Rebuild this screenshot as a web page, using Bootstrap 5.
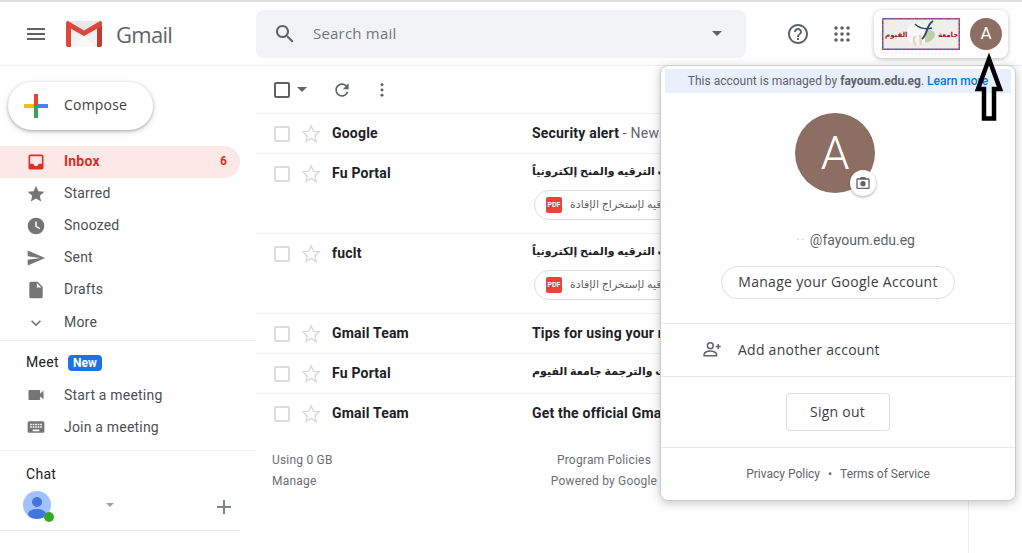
<!DOCTYPE html>
<html lang="en">
<head>
<meta charset="utf-8">
<title>Gmail</title>
<link href="https://cdn.jsdelivr.net/npm/bootstrap@5.3.0/dist/css/bootstrap.min.css" rel="stylesheet">
<style>
html,body{height:553px;overflow:hidden;background:#fff}
body{font-family:Roboto,"DejaVu Sans",sans-serif;font-size:14px;color:#202124}
.gs{font-family:"Open Sans",Roboto,sans-serif}
.stage{position:relative;height:553px;border-top:2px solid #e0e0e0;margin-top:0}
.topbar{height:64px;border-bottom:1px solid #eceff1;padding:0 14px 0 16px}
.ibtn{width:20px;height:20px;fill:#5f6368;flex:none;display:block}
.logo-word{font-size:22px;color:#5f6368;margin-left:14px;width:140px;line-height:1;letter-spacing:-.7px}
.searchbox{width:490px;height:48px;margin-left:0;background:#f1f3f4;border-radius:8px;padding:0 24px 0 17px}
.searchbox .label{margin-left:16px;font-size:15px;color:#73777c;letter-spacing:.2px}
.chip{width:134px;height:48px;background:#fff;border-radius:8px;box-shadow:0 1px 4px rgba(60,64,67,.35);padding:0 6px 0 8px}
.av{background:#8d6e63;color:#fff;border-radius:50%;display:flex;align-items:center;justify-content:center}
.av-sm{width:32px;height:32px;font-size:17px}
.side{width:256px;flex:none;height:487px}
.compose{width:145px;height:48px;margin:16px 0 16px 8px;border-radius:24px;background:#fff;box-shadow:0 1px 3px rgba(60,64,67,.35),0 2px 6px rgba(60,64,67,.18);padding:0 0 3px 16px;color:#3c4043;font-size:14px;letter-spacing:.2px;border:0}
.compose svg{margin-top:3px}
.navrow{height:32px;width:240px;padding:0 13px 0 26px;color:#4b4f54;border-radius:0 16px 16px 0;font-size:14px;letter-spacing:.2px}
.navrow .ibtn{margin-right:18px;fill:#757575}
.navlabel{padding-bottom:2px}
.navrow.on{background:#fce8e6;color:#d93025;font-weight:700}
.navrow.on .ibtn{fill:#d93025}
.navmore{height:34px}
.hr1{height:1px;background:#eceff1;width:256px}
.meethead{height:38px;padding:5px 0 0 26px;font-size:14px;color:#202124;letter-spacing:.3px}
.newtag{background:#1a73e8;font-size:12px;font-weight:700;padding:1px 0;border-radius:4px;margin-left:9px;line-height:14px;width:34px;text-align:center;letter-spacing:0}
.chathead{padding:13px 0 0 26px;height:40px;color:#202124;font-size:14px;line-height:20px;letter-spacing:.3px}
.chatrow{padding:0 9px 0 23px;width:240px;height:40px;border-bottom:1px solid #e3e5e8;position:relative}
.me{width:28px;height:28px;display:block}
.content{width:713px;flex:none;border-right:1px solid #eee;height:487px}
.tools{height:48px;border-bottom:1px solid #eceff1;padding-left:18px}
.cbdark{width:16px;height:16px;border:2px solid #5f6368;border-radius:2px}
.msgs .list-group-item{padding:0 0 0 18px;height:40px;border-color:#eceff1;border-width:0 0 1px;display:flex;white-space:nowrap;overflow:hidden;background:#fff;color:#202124}
.msgs .list-group-item.tall{height:80px}
.cb{width:16px;height:16px;border:2px solid #dcdcdc;border-radius:2px;margin-top:12px;flex:none}
.st{width:20px;height:20px;margin:10px 0 0 11px;flex:none;fill:none;stroke:#d9d9d9;stroke-width:1.6}
.who{width:200px;margin-left:11px;flex:none;font-weight:700;line-height:38px;letter-spacing:.2px}
.what{line-height:38px;font-weight:700;letter-spacing:.2px}
.what small{font-weight:400;font-size:14px;color:#5f6368}
.what .ar{font-size:11px;line-height:36px}
.attach{height:30px;margin:0 0 0 2px;border:1px solid #dadce0;border-radius:15px;padding:0 11px;width:300px;font-size:11px;font-weight:400;color:#5f6368}
.pdf{width:16px;height:16px;border-radius:2px;background:#ea4335;color:#fff;font-size:7px;font-weight:700;margin-right:8px;flex:none;text-align:center;line-height:16px;letter-spacing:0}
.foot{padding:16px 0 0 16px;font-size:12px;line-height:20.5px;color:#6b6f74;letter-spacing:.2px}
.foot-l{width:278px}
.foot-c{width:108px;white-space:nowrap}
.account{position:absolute;left:660px;top:63px;width:356px;height:436px;border:1px solid #ccc;border-radius:8px;box-shadow:0 2px 10px rgba(60,64,67,.3);background:#fff}
.managed{height:24px;margin:3px 4px 0;background:#e8f0fe;border-radius:0;font-size:12px;color:#5f6368;line-height:24px}
.managed a{color:#0b74f0;text-decoration:none;font-weight:500}
.av-wrap{position:relative;width:80px;height:80px;margin:20px 0 0 134px}
.av-lg{width:80px;height:80px;font-size:46px;font-weight:300}
.cam{position:absolute;left:55px;bottom:-3px;width:26px;height:26px;border-radius:50%;background:#fff;box-shadow:0 1px 3px rgba(60,64,67,.45);display:flex;align-items:center;justify-content:center}
.mail{margin-top:37px;height:20px;line-height:20px;text-align:right;padding-right:100px;color:#5f6368;white-space:nowrap}
.mail i{font-style:normal;color:#c9ccd0;letter-spacing:1px}
.mgbtn{display:block;width:234px;height:33px;margin:16px 0 24px 60px;padding:0;line-height:30px;border:1px solid #dadce0;border-radius:17px;color:#3c4043;font-size:14px;letter-spacing:.3px;background:#fff}
.addrow{height:54px;border-top:1px solid #e8eaed;border-bottom:1px solid #e8eaed;padding:0 0 2px 41px;color:#3c4043;font-size:14px;letter-spacing:.25px}
.addrow svg{margin-right:16px;width:20px;height:20px}
.signwrap{height:71px;border-bottom:1px solid #e8eaed;padding-top:16px}
.outbtn{width:104px;height:38px;padding:0;line-height:34px;border:1px solid #dadce0;border-radius:4px;color:#3c4043;font-size:14px;letter-spacing:.25px;background:#fff;margin-left:-1px}
.legal{height:52px;font-size:12px;color:#5f6368}
.legal b{font-weight:400;margin:0 8px}
.annot{position:absolute;left:974px;top:51px;width:30px;height:68px}
</style>
</head>
<body>
<div class="stage">
  <header class="topbar d-flex align-items-center">
    <svg class="ibtn" viewBox="0 0 24 24" style="width:24px;height:24px;margin-left:8px" aria-label="Main menu"><path d="M3 18h18v-2H3v2zm0-5h18v-2H3v2zm0-7v2h18V6H3z"/></svg>
    <svg width="36" height="26" viewBox="0 0 36 26" style="margin-left:18px;flex:none" aria-label="Gmail logo">
      <path d="M2 0h32a2 2 0 0 1 2 2v22a2 2 0 0 1-2 2H2a2 2 0 0 1-2-2V2a2 2 0 0 1 2-2z" fill="#e8e8e8"/>
      <path d="M5 10l13 6 13-6v16H5z" fill="#f2f2f2"/>
      <path d="M5 26l13-11 13 11z" fill="#f9f9f9"/>
      <path d="M0 3V24a2 2 0 0 0 2 2h3V7z" fill="#d9483b"/>
      <path d="M36 3V24a2 2 0 0 1-2 2h-3V7z" fill="#c23b2e"/>
      <path d="M2 0L18 9.500 34 0a2 2 0 0 1 2 2v3L18 15 0 5V2a2 2 0 0 1 2-2z" fill="#d9483b"/>
    </svg>
    <span class="logo-word gs">Gmail</span>
    <div class="searchbox d-flex align-items-center flex-none">
      <svg class="ibtn" viewBox="0 0 24 24" style="width:24px;height:24px" aria-label="Search"><path d="M15.5 14h-.79l-.28-.27C15.41 12.59 16 11.11 16 9.5 16 5.91 13.09 3 9.5 3S3 5.91 3 9.5 5.91 16 9.5 16c1.61 0 3.09-.59 4.23-1.57l.27.28v.79l5 4.99L20.49 19l-4.99-5zm-6 0C7.01 14 5 11.99 5 9.5S7.01 5 9.5 5 14 7.01 14 9.5 11.99 14 9.5 14z"/></svg>
      <span class="label gs">Search mail</span>
      <svg class="ibtn ms-auto" viewBox="0 0 10 5" style="width:10px;height:5px"><path d="M0 0l5 5 5-5z"/></svg>
    </div>
    <svg class="ibtn" viewBox="0 0 24 24" style="width:24px;height:24px;margin-left:40px" aria-label="Help"><path d="M11 18h2v-2h-2v2zm1-16C6.48 2 2 6.48 2 12s4.48 10 10 10 10-4.48 10-10S17.52 2 12 2zm0 18c-4.41 0-8-3.59-8-8s3.59-8 8-8 8 3.59 8 8-3.59 8-8 8zm0-14c-2.21 0-4 1.79-4 4h2c0-1.1.9-2 2-2s2 .9 2 2c0 2-3 1.75-3 5h2c0-2.25 3-2.5 3-5 0-2.21-1.79-4-4-4z"/></svg>
    <svg class="ibtn" viewBox="0 0 16 16" style="width:16px;height:16px;margin-left:24px" aria-label="Apps"><circle cx="2" cy="2" r="1.8"/><circle cx="8" cy="2" r="1.8"/><circle cx="14" cy="2" r="1.8"/><circle cx="2" cy="8" r="1.8"/><circle cx="8" cy="8" r="1.8"/><circle cx="14" cy="8" r="1.8"/><circle cx="2" cy="14" r="1.8"/><circle cx="8" cy="14" r="1.8"/><circle cx="14" cy="14" r="1.8"/></svg>
    <div class="chip d-flex align-items-center justify-content-between" style="margin-left:24px">
      <svg width="78" height="32" viewBox="0 0 78 32" aria-label="Fayoum University logo">
        <rect width="78" height="32" fill="#efeeea"/>
        <rect x=".75" y=".75" width="76.500" height="30.500" fill="none" stroke="#3a62b5" stroke-width="1.500" stroke-dasharray="4 4"/>
        <rect x=".75" y=".75" width="76.500" height="30.500" fill="none" stroke="#d9305c" stroke-width="1.500" stroke-dasharray="4 4" stroke-dashoffset="4"/>
        <circle cx="35" cy="16" r="11" fill="#f8f7f3"/>
        <path d="M46 12c7 0 9 4 5 9-3 3-6 4-8 3 0-5 0-9 3-12z" fill="#bcd0a4"/>
        <path d="M33 18c-2 4-1 7 1 9M38 17l1 10" fill="none" stroke="#e6d3c0" stroke-width="2.500"/>
        <path d="M51 3C44 7 46 16 40 21" fill="none" stroke="#2f4a7c" stroke-width="2"/>
        <path d="M33 6c3 3 8 6 17 4" fill="none" stroke="#2f4a7c" stroke-width="1.500"/>
        <text x="3" y="19" font-size="7" font-weight="700" fill="#8c2f2f" font-family="DejaVu Sans">الفيوم</text>
        <text x="56" y="19" font-size="7" font-weight="700" fill="#8c2f2f" font-family="DejaVu Sans">جامعة</text>
      </svg>
      <div class="av av-sm">A</div>
    </div>
  </header>

  <div class="d-flex">
    <aside class="side">
      <button class="compose btn d-flex align-items-center gs" type="button">
        <svg width="24" height="24" viewBox="0 0 24 24" style="margin-right:16px;flex:none" aria-label="Plus"><rect x="0" y="10" width="12" height="4" fill="#fbbc05"/><rect x="12" y="10" width="12" height="4" fill="#4285f4"/><rect x="10" y="0" width="4" height="12" fill="#ea4335"/><rect x="10" y="12" width="4" height="12" fill="#34a853"/></svg>
        Compose
      </button>
      <nav>
        <div class="navrow on d-flex align-items-center">
          <svg class="ibtn" viewBox="0 0 24 24"><path d="M19 3H5c-1.100 0-2 .9-2 2v14c0 1.100.9 2 2 2h14c1.100 0 2-.9 2-2V5c0-1.100-.9-2-2-2zm0 11h-4c0 1.660-1.350 3-3 3s-3-1.340-3-3H5V5h14v9z"/></svg>
          <span class="navlabel">Inbox</span><span class="ms-auto navlabel" style="font-size:12px">6</span>
        </div>
        <div class="navrow d-flex align-items-center"><svg class="ibtn" viewBox="0 0 24 24"><path d="M12 17.270L18.180 21l-1.640-7.030L22 9.240l-7.190-.61L12 2 9.190 8.630 2 9.240l5.460 4.730L5.820 21z"/></svg><span class="navlabel">Starred</span></div>
        <div class="navrow d-flex align-items-center"><svg class="ibtn" viewBox="0 0 24 24"><circle cx="12" cy="12" r="10"/><path d="M12 6.500V12.500l4.500 2.700" fill="none" stroke="#fff" stroke-width="1.800"/></svg><span class="navlabel">Snoozed</span></div>
        <div class="navrow d-flex align-items-center"><svg class="ibtn" viewBox="0 0 24 24"><path d="M2.010 21L23 12 2.010 3 2 10l15 2-15 2z"/></svg><span class="navlabel">Sent</span></div>
        <div class="navrow d-flex align-items-center"><svg class="ibtn" viewBox="0 0 24 24"><path d="M6 2c-1.100 0-1.990.9-1.990 2L4 20c0 1.100.89 2 1.990 2H18c1.100 0 2-.9 2-2V8l-6-6H6zm7 7V3.500L18.500 9H13z"/></svg><span class="navlabel">Drafts</span></div>
        <div class="navrow navmore d-flex align-items-center"><svg class="ibtn" viewBox="0 0 24 24"><path d="M16.590 8.590L12 13.170 7.410 8.590 6 10l6 6 6-6z"/></svg><span class="navlabel">More</span></div>
      </nav>
      <div class="hr1"></div>
      <div class="meethead d-flex align-items-center">Meet<span class="newtag badge text-white">New</span></div>
      <div class="navrow d-flex align-items-center"><svg class="ibtn" viewBox="0 0 24 24"><path d="M17 10.500V7c0-.55-.45-1-1-1H4c-.55 0-1 .45-1 1v10c0 .55.45 1 1 1h12c.55 0 1-.45 1-1v-3.500l4 4v-11l-4 4z"/></svg>Start a meeting</div>
      <div class="navrow d-flex align-items-center"><svg class="ibtn" viewBox="0 0 24 24"><path d="M20 5H4c-1.100 0-1.990.9-1.990 2L2 17c0 1.100.9 2 2 2h16c1.100 0 2-.9 2-2V7c0-1.100-.9-2-2-2zm-9 3h2v2h-2V8zm0 3h2v2h-2v-2zM8 8h2v2H8V8zm0 3h2v2H8v-2zm-1 2H5v-2h2v2zm0-3H5V8h2v2zm9 7H8v-2h8v2zm0-4h-2v-2h2v2zm0-3h-2V8h2v2zm3 3h-2v-2h2v2zm0-3h-2V8h2v2z"/></svg>Join a meeting</div>
      <div class="hr1" style="margin-top:7px"></div>
      <div class="chathead">Chat</div>
      <div class="chatrow d-flex align-items-start">
        <svg class="me" viewBox="0 0 28 28" aria-label="Profile"><circle cx="14" cy="14" r="14" fill="#a0c3ff"/><circle cx="14" cy="11" r="5" fill="#4374e0"/><ellipse cx="14" cy="23" rx="9" ry="5" fill="#4374e0"/></svg>
        <svg width="12" height="12" viewBox="0 0 12 12" style="margin:20px 0 0 -8px;flex:none"><circle cx="6" cy="6" r="5" fill="#34ab1f"/></svg>
        <svg class="ibtn" viewBox="0 0 8 4" style="width:8px;height:4px;margin:12px 0 0 51px;fill:#9aa0a6"><path d="M0 0l4 4 4-4z"/></svg>
        <svg class="ibtn ms-auto" viewBox="0 0 14 14" style="width:14px;height:14px;margin-top:9px;fill:#80868b"><path d="M6 0h2v6h6v2H8v6H6V8H0V6h6z"/></svg>
      </div>
    </aside>

    <main class="content">
      <div class="tools d-flex align-items-center">
        <div class="cbdark"></div>
        <svg class="ibtn" viewBox="0 0 10 5" style="width:10px;height:5px;margin-left:7px"><path d="M0 0l5 5 5-5z"/></svg>
        <svg class="ibtn" viewBox="0 0 24 24" style="margin-left:25px" aria-label="Refresh"><path d="M17.650 6.350C16.200 4.900 14.210 4 12 4c-4.420 0-7.990 3.580-7.990 8s3.570 8 7.990 8c3.730 0 6.840-2.550 7.730-6h-2.080c-.82 2.330-3.040 4-5.650 4-3.310 0-6-2.690-6-6s2.690-6 6-6c1.660 0 3.140.69 4.220 1.780L13 11h7V4l-2.350 2.350z"/></svg>
        <svg class="ibtn" viewBox="0 0 4 16" style="width:4px;height:14px;margin-left:28px" aria-label="More"><circle cx="2" cy="2" r="1.700"/><circle cx="2" cy="8" r="1.700"/><circle cx="2" cy="14" r="1.700"/></svg>
      </div>
      <div class="msgs list-group list-group-flush rounded-0">
        <div class="list-group-item">
          <div class="cb"></div><svg class="st" viewBox="0 0 24 24"><path d="M12 17.270L18.180 21l-1.640-7.030L22 9.240l-7.190-.61L12 2 9.190 8.630 2 9.240l5.460 4.730L5.820 21z"/></svg>
          <div class="who">Google</div><div class="what">Security alert <small>- New</small></div>
        </div>
        <div class="list-group-item tall">
          <div class="cb"></div><svg class="st" viewBox="0 0 24 24"><path d="M12 17.270L18.180 21l-1.640-7.030L22 9.240l-7.190-.61L12 2 9.190 8.630 2 9.240l5.460 4.730L5.820 21z"/></svg>
          <div class="who">Fu Portal</div>
          <div class="what"><div class="ar"><span dir="rtl">طلبات الترقيه والمنح إلكترونياً</span></div>
            <div class="attach d-flex align-items-center"><span class="pdf">PDF</span><span dir="rtl">شهادة الترقيه لإستخراج الإفادة</span></div></div>
        </div>
        <div class="list-group-item tall">
          <div class="cb"></div><svg class="st" viewBox="0 0 24 24"><path d="M12 17.270L18.180 21l-1.640-7.030L22 9.240l-7.190-.61L12 2 9.190 8.630 2 9.240l5.460 4.730L5.820 21z"/></svg>
          <div class="who">fuclt</div>
          <div class="what"><div class="ar"><span dir="rtl">طلبات الترقيه والمنح إلكترونياً</span></div>
            <div class="attach d-flex align-items-center"><span class="pdf">PDF</span><span dir="rtl">شهادة الترقيه لإستخراج الإفادة</span></div></div>
        </div>
        <div class="list-group-item">
          <div class="cb"></div><svg class="st" viewBox="0 0 24 24"><path d="M12 17.270L18.180 21l-1.640-7.030L22 9.240l-7.190-.61L12 2 9.190 8.630 2 9.240l5.460 4.730L5.820 21z"/></svg>
          <div class="who">Gmail Team</div><div class="what">Tips for using your new</div>
        </div>
        <div class="list-group-item">
          <div class="cb"></div><svg class="st" viewBox="0 0 24 24"><path d="M12 17.270L18.180 21l-1.640-7.030L22 9.240l-7.190-.61L12 2 9.190 8.630 2 9.240l5.460 4.730L5.820 21z"/></svg>
          <div class="who">Fu Portal</div><div class="what"><div class="ar"><span dir="rtl">كلية اللغات والترجمة جامعة الفيوم</span></div></div>
        </div>
        <div class="list-group-item">
          <div class="cb"></div><svg class="st" viewBox="0 0 24 24"><path d="M12 17.270L18.180 21l-1.640-7.030L22 9.240l-7.190-.61L12 2 9.190 8.630 2 9.240l5.460 4.730L5.820 21z"/></svg>
          <div class="who">Gmail Team</div><div class="what">Get the official Gma</div>
        </div>
      </div>
      <div class="foot d-flex">
        <div class="foot-l">Using 0 GB<br>Manage</div>
        <div class="foot-c text-center">Program Policies<br>Powered by Google</div>
      </div>
    </main>
  </div>

  <section class="account card">
    <div class="managed text-center">This account is managed by <strong>fayoum.edu.eg</strong>. <a href="#">Learn more</a></div>
    <div class="av-wrap">
      <div class="av av-lg">A</div>
      <div class="cam"><svg width="16" height="16" viewBox="0 0 24 24" fill="#5f6368" aria-label="Change photo"><path d="M20 5h-3.200L15 3H9L7.200 5H4a2 2 0 0 0-2 2v12a2 2 0 0 0 2 2h16a2 2 0 0 0 2-2V7a2 2 0 0 0-2-2zm0 14H4V7h16v12z"/><circle cx="12" cy="13" r="4"/></svg></div>
    </div>
    <div class="mail"><i>·· </i>@fayoum.edu.eg</div>
    <a class="mgbtn btn gs" href="#">Manage your Google Account</a>
    <div class="addrow d-flex align-items-center gs">
      <svg viewBox="0 0 24 24" fill="none" stroke="#5f6368" stroke-width="1.800" aria-label="Add account"><circle cx="10" cy="8" r="3.500"/><path d="M2.500 20v-1.500c0-2.500 4-4 7.500-4s7.500 1.500 7.500 4V20z"/><path d="M19.500 6v6M16.500 9h6"/></svg>
      Add another account
    </div>
    <div class="signwrap text-center"><button class="outbtn btn gs" type="button">Sign out</button></div>
    <div class="legal d-flex align-items-center justify-content-center">Privacy Policy<b>•</b>Terms of Service</div>
  </section>

  <svg class="annot" viewBox="0 0 30 68" aria-label="Arrow"><path d="M15 6L4 36h6v29.500h10V36h6z" fill="none" stroke="#000" stroke-width="4.500" stroke-linejoin="miter"/></svg>
</div>
<script src="https://cdn.jsdelivr.net/npm/bootstrap@5.3.0/dist/js/bootstrap.bundle.min.js"></script>
</body>
</html>
